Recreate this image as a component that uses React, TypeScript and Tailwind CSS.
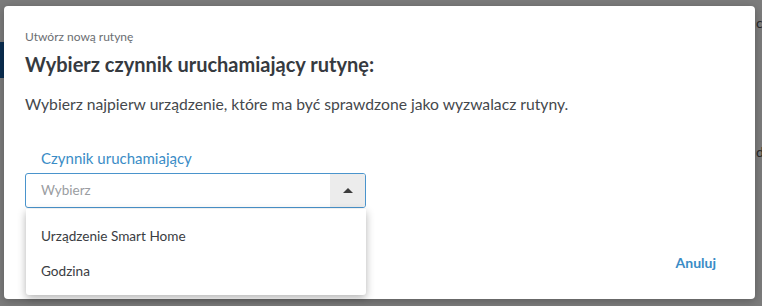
export default function App() {
  return (
    <div className="relative h-[306px] w-[762px] overflow-hidden bg-[#7c7c7c] pl-[4px] pt-[6px] font-['Lato',sans-serif]">
      {/* dimmed page behind the dialog */}
      <div className="absolute left-0 top-[42px] h-[36px] w-[4px] bg-[#0b2f52]" />
      <div className="absolute left-[756px] top-[12px] text-[14px] text-[#2a2a2a]">c</div>
      <div className="absolute left-[756px] top-[141px] text-[14px] text-[#2a2a2a]">d</div>

      <div className="relative flex h-[293px] w-[751px] flex-col rounded-[4px] bg-white px-[21px] pt-[23px] shadow-[0_2px_10px_rgba(0,0,0,0.25)]">
        <div className="text-[12px] leading-[16px] text-[#6b6e72]">Utwórz nową rutynę</div>
        <h2 className="mt-[6px] text-[20px] font-bold leading-[26px] text-[#363a3f]">Wybierz czynnik uruchamiający rutynę:</h2>
        <p className="mt-[17px] text-[15.7px] leading-[20px] text-[#45484c]">Wybierz najpierw urządzenie, które ma być sprawdzone jako wyzwalacz rutyny.</p>

        <div className="relative mt-[35px] w-[341px]">
          <div className="pl-[16px] text-[15px] leading-[18px] text-[#3a8cc6]">Czynnik uruchamiający</div>
          <div className="mt-[6px] flex h-[35px] items-stretch overflow-hidden rounded-[3px] border border-[#4a94cc]">
            <div className="flex flex-1 items-center pl-[15px] text-[13.5px] text-[#9a9da1]">Wybierz</div>
            <div className="flex w-[35px] items-center justify-center bg-[#ececec]">
              <div className="h-0 w-0 border-x-[5px] border-b-[5px] border-x-transparent border-b-[#3c3c3c]" />
            </div>
          </div>
          <div className="absolute left-[1px] top-[60px] w-[340px] rounded-b-[3px] bg-white pb-[6px] pt-[10px] shadow-[0_3px_8px_rgba(0,0,0,0.3)]">
            {['Urządzenie Smart Home', 'Godzina'].map((o) => (
              <div key={o} className="px-[15px] py-[8px] text-[13.6px] leading-[19px] text-[#3a3d42]">{o}</div>
            ))}
          </div>
        </div>

        <div className="mt-[44px] flex justify-end pr-[18px]">
          <button className="text-[14px] font-bold text-[#3a8cc6]">Anuluj</button>
        </div>
      </div>
    </div>
  );
}
